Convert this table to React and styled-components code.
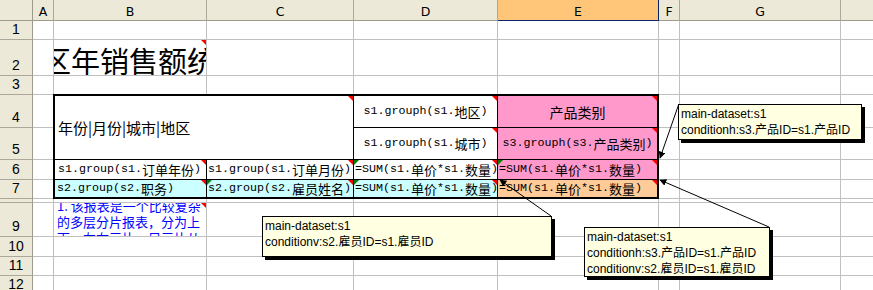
import React from 'react';
import styled, { createGlobalStyle } from 'styled-components';

const Global = createGlobalStyle`
  html, body { margin: 0; padding: 0; background: #fff; overflow: hidden; }
  #root { width: 873px; height: 290px; }
`;

const Sheet = styled.div`
  position: relative;
  width: 873px;
  height: 290px;
  overflow: hidden;
  display: grid;
  grid-template-columns: 33px 21px 153px 147px 144px 161px 21px 161px 161px;
  grid-template-rows: 21px 19px 36px 19px 33px 32px 20px 19px 4px 34px 20px 19px 19px;
  background: #fff;
`;

const Corner = styled.div`
  grid-row: 1;
  grid-column: 1;
  background: #ece9d8;
  border-right: 1px solid #9d9a8b;
  border-bottom: 1px solid #9d9a8b;
  box-sizing: border-box;
`;

const ColHead = styled.div`
  grid-row: 1;
  grid-column: ${(p) => p.$c};
  background: ${(p) => (p.$active ? '#ffc67a' : '#ece9d8')};
  border-right: 1px solid ${(p) => (p.$active ? '#0a246a' : '#aca899')};
  border-bottom: 1px solid ${(p) => (p.$active ? '#0a246a' : '#9d9a8b')};
  box-sizing: border-box;
  display: flex;
  align-items: center;
  justify-content: center;
  padding-top: 2px;
  font-family: "DejaVu Sans", sans-serif;
  font-size: 12.5px;
  color: #000;
  overflow: hidden;
`;

const RowHead = styled.div`
  grid-column: 1;
  grid-row: ${(p) => p.$r};
  background: #ece9d8;
  border-right: 1px solid #9d9a8b;
  border-bottom: 1px solid #aca899;
  box-sizing: border-box;
  display: flex;
  align-items: flex-end;
  justify-content: center;
  padding-bottom: 3px;
  font-family: "Liberation Sans", sans-serif;
  font-size: 14px;
  line-height: 1;
  color: #000;
  overflow: hidden;
`;

const Cell = styled.div`
  grid-row: ${(p) => p.$r};
  grid-column: ${(p) => p.$c};
  position: relative;
  border-right: 1px solid #c0c0c0;
  border-bottom: 1px solid #c0c0c0;
  box-sizing: border-box;
  overflow: hidden;
  min-width: 0;
  min-height: 0;
  display: flex;
  align-items: ${(p) => p.$valign || 'flex-end'};
`;

const Title = styled.div`
  font-family: "Noto Sans CJK SC", sans-serif;
  font-size: 29px;
  line-height: 1;
  white-space: nowrap;
  margin-left: -41px;
  color: #000;
`;

const Note = styled.div`
  color: #0000ff;
  font-family: "Noto Sans CJK SC", sans-serif;
  font-size: 13px;
  line-height: 16px;
  margin-top: -5px;
  padding: 0 2px 0 3px;
  width: 100%;
  box-sizing: border-box;
`;

const Table = styled.div`
  grid-column: 3 / 7;
  grid-row: 5 / 9;
  margin: -1px 0 0 -1px;
  border: 2px solid #000;
  box-sizing: border-box;
  display: grid;
  grid-template-columns: 152px 147px 144px 1fr;
  grid-template-rows: 32px 32px 20px 1fr;
  position: relative;
  z-index: 1;
  background: #fff;
`;

const TCell = styled.div`
  grid-column: ${(p) => p.$c};
  grid-row: ${(p) => p.$r};
  position: relative;
  background: ${(p) => p.$bg || '#fff'};
  border-right: ${(p) => (p.$lastCol ? 'none' : '1px solid #000')};
  border-bottom: ${(p) => (p.$lastRow ? 'none' : '1px solid #000')};
  box-sizing: border-box;
  display: flex;
  align-items: center;
  justify-content: ${(p) => (p.$center ? 'center' : 'flex-start')};
  padding-left: ${(p) => (p.$center ? 0 : p.$pad ?? 2)}px;
  white-space: nowrap;
  overflow: hidden;
  color: #000;
  line-height: 1;
`;

const Latin = styled.span`
  font-family: "Liberation Mono", monospace;
  font-size: 11.67px;
`;

const Han = styled.span`
  font-family: "Noto Sans CJK SC", sans-serif;
  font-size: ${(p) => p.$size}px;
`;

const Mark = styled.span`
  position: absolute;
  top: 0;
  ${(p) => (p.$left ? 'left: 0;' : 'right: 0;')}
  width: 0;
  height: 0;
  border-top: ${(p) => p.$s || 5}px solid ${(p) => p.$color};
  ${(p) =>
    p.$left
      ? `border-right: ${p.$s || 5}px solid transparent;`
      : `border-left: ${p.$s || 5}px solid transparent;`}
  z-index: 2;
`;

const Overlay = styled.svg`
  position: absolute;
  left: 0;
  top: 0;
  width: 873px;
  height: 290px;
  pointer-events: none;
  z-index: 3;
`;

const Comment = styled.div`
  position: absolute;
  left: ${(p) => p.$x}px;
  top: ${(p) => p.$y}px;
  width: ${(p) => p.$w}px;
  height: ${(p) => p.$h}px;
  box-sizing: border-box;
  background: #ffffe1;
  border: 1px solid #000;
  box-shadow: 3px 3px 0 #000;
  padding: 1px 2px;
  font-family: "Liberation Sans", "Noto Sans CJK SC", sans-serif;
  font-size: 12px;
  line-height: 16px;
  color: #000;
  white-space: nowrap;
  z-index: 4;
`;

const HAN = /([\u2e80-\u9fff\uff00-\uffef\u3000-\u303f]+)/;

function Mixed({ text, han = 13 }) {
  return text
    .split(HAN)
    .filter(Boolean)
    .map((s, i) =>
      HAN.test(s) ? (
        <Han key={i} $size={han}>
          {s}
        </Han>
      ) : (
        <Latin key={i}>{s}</Latin>
      )
    );
}

const COLS = ['A', 'B', 'C', 'D', 'E', 'F', 'G', 'H'];
const ROWS = [1, 2, 3, 4, 5, 6, 7, 8, 9, 10, 11, 12];

const SUM = '=SUM(s1.单价*s1.数量)';

export default function App() {
  const plain = [];
  ROWS.forEach((r, ri) => {
    COLS.forEach((c, ci) => {
      const gr = ri + 2;
      const gc = ci + 2;
      if (r >= 4 && r <= 7 && ci >= 1 && ci <= 4) return;
      if (r === 2 && c === 'B') {
        plain.push(
          <Cell key={c + r} $r={gr} $c={gc}>
            <Title>地区年销售额统计表</Title>
            <Mark $color="#ff0000" />
          </Cell>
        );
        return;
      }
      if (r === 9 && c === 'B') {
        plain.push(
          <Cell key={c + r} $r={gr} $c={gc} $valign="flex-start">
            <Note>1. 该报表是一个比较复杂的多层分片报表，分为上下，左右三片，另三片从属于主片。</Note>
            <Mark $color="#ff0000" />
          </Cell>
        );
        return;
      }
      plain.push(<Cell key={c + r} $r={gr} $c={gc} />);
    });
  });

  return (
    <>
      <Global />
      <Sheet>
        <Corner />
        {COLS.map((c, i) => (
          <ColHead key={c} $c={i + 2} $active={c === 'E'}>
            {c}
          </ColHead>
        ))}
        {ROWS.map((r, i) => (
          <RowHead key={r} $r={i + 2}>
            {r === 8 ? '' : r}
          </RowHead>
        ))}
        {plain}

        <Table>
          <TCell $c="1 / 3" $r="1 / 3" $pad={3}>
            <Han $size={15}>年份|月份|城市|地区</Han>
            <Mark $color="#ff0000" />
          </TCell>
          <TCell $c={3} $r={1} $center>
            <Mixed text="s1.grouph(s1.地区)" />
            <Mark $color="#ff0000" />
          </TCell>
          <TCell $c={4} $r={1} $center $lastCol $bg="#ff99cc">
            <Mixed text="产品类别" han={14} />
            <Mark $color="#ff0000" />
          </TCell>
          <TCell $c={3} $r={2} $center>
            <Mixed text="s1.grouph(s1.城市)" />
            <Mark $color="#ff0000" />
          </TCell>
          <TCell $c={4} $r={2} $center $lastCol $bg="#ff99cc">
            <Mixed text="s3.grouph(s3.产品类别)" />
            <Mark $color="#ff0000" />
          </TCell>

          <TCell $c={1} $r={3} $pad={3}>
            <Mixed text="s1.group(s1.订单年份)" />
            <Mark $color="#ff0000" />
          </TCell>
          <TCell $c={2} $r={3} $pad={1}>
            <Mixed text="s1.group(s1.订单月份)" />
            <Mark $color="#ff0000" />
          </TCell>
          <TCell $c={3} $r={3} $pad={1}>
            <Mixed text={SUM} />
            <Mark $left $color="#008000" />
            <Mark $color="#ff0000" />
          </TCell>
          <TCell $c={4} $r={3} $pad={1} $lastCol $bg="#ff99cc">
            <Mixed text={SUM} />
            <Mark $left $color="#008000" />
            <Mark $color="#ff0000" />
          </TCell>

          <TCell $c={1} $r={4} $pad={2} $lastRow $bg="#ccffff">
            <Mixed text="s2.group(s2.职务)" />
            <Mark $color="#ff0000" />
          </TCell>
          <TCell $c={2} $r={4} $pad={1} $lastRow $bg="#ccffff">
            <Mixed text="s2.group(s2.雇员姓名)" />
            <Mark $left $color="#008000" />
            <Mark $color="#ff0000" />
          </TCell>
          <TCell $c={3} $r={4} $pad={1} $lastRow $bg="#ccffff">
            <Mixed text={SUM} />
            <Mark $left $color="#008000" />
            <Mark $color="#ff0000" />
          </TCell>
          <TCell $c={4} $r={4} $pad={1} $lastRow $lastCol $bg="#ffcc99">
            <Mixed text={SUM} />
            <Mark $color="#ff0000" />
          </TCell>
        </Table>

        <Overlay viewBox="0 0 873 290">
          <defs>
            <marker id="ah" viewBox="0 0 10 10" refX="9" refY="5" markerWidth="7" markerHeight="7" orient="auto" markerUnits="userSpaceOnUse">
              <path d="M0 0 L10 5 L0 10 z" fill="#000" />
            </marker>
          </defs>
          <line x1="678.5" y1="105" x2="660" y2="158" stroke="#000" strokeWidth="1" markerEnd="url(#ah)" />
          <line x1="551" y1="216" x2="500" y2="180" stroke="#000" strokeWidth="1" markerEnd="url(#ah)" />
          <line x1="769" y1="227" x2="660" y2="180" stroke="#000" strokeWidth="1" markerEnd="url(#ah)" />
        </Overlay>

        <Comment $x={678} $y={104} $w={184} $h={36}>
          main-dataset:s1
          <br />
          conditionh:s3.产品ID=s1.产品ID
        </Comment>
        <Comment $x={262} $y={216} $w={290} $h={41}>
          main-dataset:s1
          <br />
          conditionv:s2.雇员ID=s1.雇员ID
        </Comment>
        <Comment $x={584} $y={227} $w={186} $h={50}>
          main-dataset:s1
          <br />
          conditionh:s3.产品ID=s1.产品ID
          <br />
          conditionv:s2.雇员ID=s1.雇员ID
        </Comment>
      </Sheet>
    </>
  );
}
